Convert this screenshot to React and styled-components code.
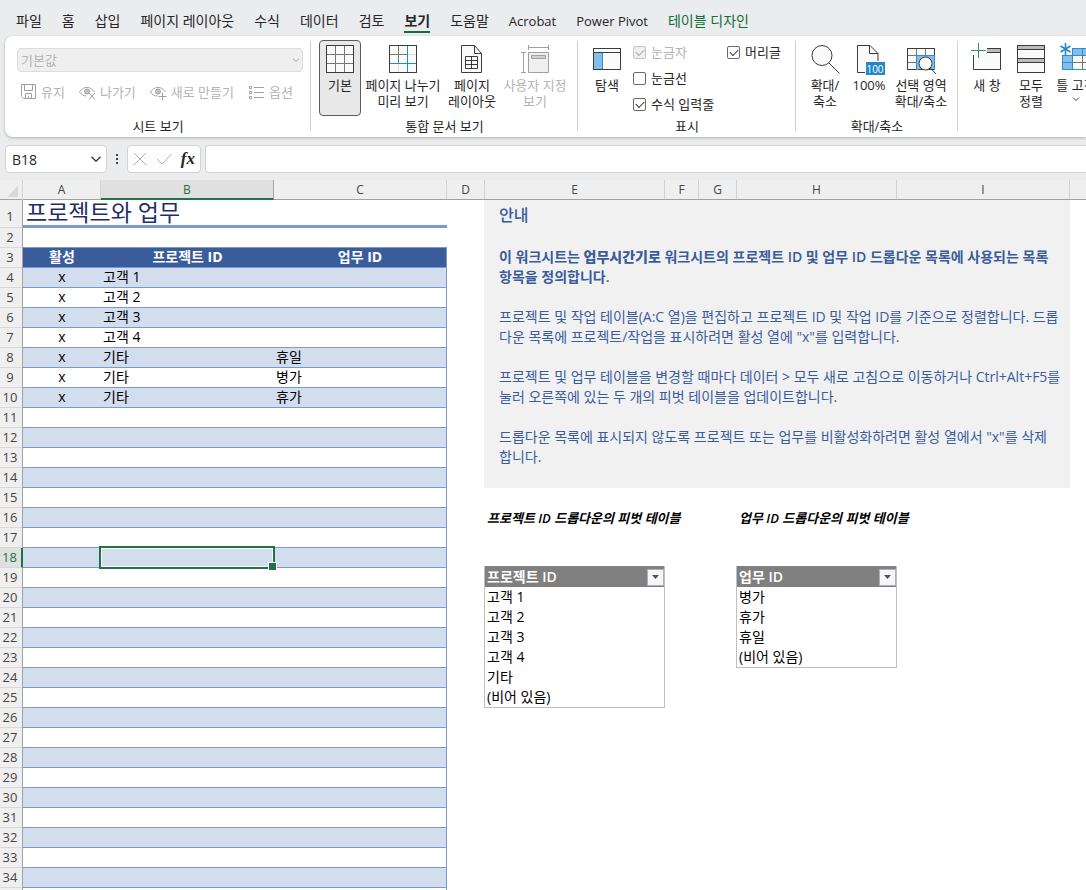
import React from "react";
import styled, { createGlobalStyle, css } from "styled-components";

const uiFont = `"Open Sans", "Noto Sans", "Noto Sans CJK KR", sans-serif`;

const GlobalStyle = createGlobalStyle`
  * {
    box-sizing: border-box;
  }

  body {
    margin: 0;
    background: #eaecee;
    color: #262626;
    font-family: ${uiFont};
    font-size: 13px;
  }

  button, input, select {
    font: inherit;
    color: inherit;
    margin: 0;
  }

  button {
    padding: 0;
    border: 0;
    background: none;
    cursor: pointer;
  }

  svg {
    display: block;
    flex: none;
  }
`;

const Window = styled.div`
  display: flex;
  flex-direction: column;
  height: 100vh;
  overflow: hidden;
`;

/* ---------- tabs ---------- */

const TabBar = styled.nav`
  display: flex;
  gap: 20px;
  padding: 8px 16px 0;
  height: 36px;
`;

const Tab = styled.button`
  height: 25px;
  line-height: 26px;
  white-space: nowrap;
  font-size: ${({ $latin }) => ($latin ? "13px" : "14px")};
  font-weight: ${({ $active }) => ($active ? 700 : 400)};
  color: ${({ $accent }) => ($accent ? "#0f703b" : "#262626")};
  border-bottom: 2px solid ${({ $active }) => ($active ? "#0f703b" : "transparent")};
`;

/* ---------- ribbon ---------- */

const Ribbon = styled.section`
  display: flex;
  flex: none;
  height: 101px;
  margin-left: 5px;
  background: #fff;
  border-radius: 8px 0 0 8px;
  box-shadow: 0 1px 3px rgba(0, 0, 0, 0.25);
  overflow: hidden;
`;

const Group = styled.div`
  display: flex;
  flex-direction: column;
  justify-content: space-between;
  flex: none;
  width: ${({ $width }) => $width}px;
  padding: 4px 0 2px;
  background: linear-gradient(#d0d0d0, #d0d0d0) right 5px / 1px 90px no-repeat;
`;

const GroupItems = styled.div`
  display: flex;
  align-items: flex-start;
  padding-left: ${({ $inset }) => $inset}px;
`;

const GroupLabel = styled.div`
  line-height: 18px;
  text-align: center;
`;

const BigButton = styled.button`
  display: flex;
  flex-direction: column;
  align-items: center;
  flex: none;
  gap: 2px;
  width: ${({ $width }) => $width}px;
  height: 76px;
  padding-top: 2px;
  border: 1px solid ${({ $active }) => ($active ? "#5c5c5c" : "transparent")};
  border-radius: 4px;
  background: ${({ $active }) => ($active ? "#e8e8e8" : "none")};
  color: ${({ disabled }) => (disabled ? "#b4b4b4" : "#262626")};
  line-height: 16px;
  white-space: nowrap;
`;

const ViewPanel = styled.div`
  display: flex;
  flex-direction: column;
  gap: 10px;
  padding: 8px 8px 0 12px;
`;

const SelectBox = styled.div`
  display: grid;
  align-items: center;

  > * {
    grid-area: 1 / 1;
  }

  > svg {
    justify-self: end;
    margin-right: 3px;
  }
`;

const ViewSelect = styled.select`
  appearance: none;
  width: 100%;
  height: 24px;
  padding: 0 3px;
  border: 1px solid #dcdcdc;
  border-radius: 4px;
  background: #efefef;
  color: #b4b4b4;
  opacity: 1;
`;

const SmallButtons = styled.div`
  display: flex;
  gap: 14px;
  padding-left: 4px;
`;

const SmallButton = styled.button`
  display: flex;
  align-items: center;
  gap: 4px;
  height: 20px;
  color: #b4b4b4;
  line-height: 16px;
  white-space: nowrap;
`;

const CheckColumn = styled.div`
  display: flex;
  flex-direction: column;
  gap: 2px;
  width: 94px;
  margin-left: 4px;
`;

const CheckLabel = styled.label`
  display: flex;
  align-items: center;
  gap: 5px;
  height: 24px;
  line-height: 16px;
  white-space: nowrap;
  color: ${({ $disabled }) => ($disabled ? "#b4b4b4" : "#262626")};
`;

const CheckInput = styled.input`
  appearance: none;
  display: grid;
  place-items: center;
  width: 13px;
  height: 13px;
  border: 1px solid #6a6a6a;
  border-radius: 2px;
  background: #fff;

  &:checked::after {
    content: "";
    width: 7px;
    height: 4px;
    margin-bottom: 2px;
    border: solid #333;
    border-width: 0 0 1px 1px;
    transform: rotate(-45deg);
  }

  &:disabled {
    border-color: #c4c4c4;
    background: #f0f0f0;
  }

  &:disabled::after {
    border-color: #a8a8a8;
  }
`;

/* ---------- formula bar ---------- */

const FormulaBar = styled.div`
  display: flex;
  flex: none;
  height: 43px;
  padding: 8px 0 7px 5px;
`;

const fieldBox = css`
  display: flex;
  align-items: center;
  background: #fff;
  border: 1px solid #d2d2d2;
  border-radius: 4px;
`;

const NameBox = styled.div`
  ${fieldBox}
  width: 102px;
  padding: 0 4px 0 6px;
`;

const NameInput = styled.input`
  flex: 1;
  min-width: 0;
  padding: 0;
  border: 0;
  outline: 0;
  font-size: 14px;
`;

const Dots = styled.div`
  display: flex;
  flex-direction: column;
  justify-content: center;
  align-items: center;
  gap: 2px;
  width: 20px;

  i {
    width: 2px;
    height: 2px;
    background: #444;
  }
`;

const FormulaButtons = styled.div`
  ${fieldBox}
  justify-content: space-between;
  width: 74px;
  margin-right: 4px;
  padding: 0 5px;
`;

const FxButton = styled.button`
  font-family: "Liberation Serif", serif;
  font-style: italic;
  font-weight: 700;
  font-size: 17px;
  line-height: 20px;
`;

const FormulaInput = styled.input`
  ${fieldBox}
  flex: 1;
  min-width: 0;
  border-right: 0;
  border-radius: 4px 0 0 4px;
  outline: 0;
`;

/* ---------- sheet ---------- */

const ColumnHeads = styled.div`
  display: grid;
  grid-template-columns: 23px 78px 173px 173px 38px 180px 34px 38px 160px 173px 1fr;
  flex: none;
  height: 20px;
  border-bottom: 1px solid #a0a2a4;
  background: #efefef;
  font-size: 12px;
  line-height: 20px;
  text-align: center;
`;

const ColumnHead = styled.div`
  height: 19px;
  border-right: 1px solid #d4d4d4;
  color: #444;

  ${({ $active }) =>
    $active &&
    css`
      height: 20px;
      border-right-color: #a8a8a8;
      border-bottom: 2px solid #217346;
      background: #e0e0e0;
      color: #217346;
    `}
`;

const Corner = styled.div`
  display: flex;
  align-items: flex-end;
  justify-content: flex-end;
  padding: 0 4px 3px 0;
  border-right: 1px solid #d4d4d4;
`;

const SheetBody = styled.main`
  display: flex;
  flex: 1;
  min-height: 0;
  overflow: hidden;
  background: #fff;
  color: #000;
  font-size: 14px;
`;

const RowHeads = styled.div`
  flex: none;
  width: 23px;
  border-right: 1px solid #a0a2a4;
  background: #efefef;
`;

const RowHead = styled.div`
  height: ${({ $first }) => ($first ? 28 : 20)}px;
  padding: ${({ $first }) => ($first ? 7 : 0)}px 2px 0 0;
  border-bottom: 1px solid #d8d8d8;
  font-size: 13px;
  line-height: 19px;
  text-align: center;
  color: #444;

  ${({ $active }) =>
    $active &&
    css`
      margin-right: -1px;
      border-right: 2px solid #217346;
      background: #e0e0e0;
      color: #217346;
    `}
`;

const ProjectArea = styled.section`
  flex: none;
  width: 424px;
`;

const SheetTitle = styled.h1`
  height: 28px;
  margin: 0;
  padding-left: 3px;
  border-bottom: 3px solid #7b9cc8;
  color: #1f2f66;
  font-size: 23px;
  font-weight: 400;
  line-height: 24px;
`;

const ProjectTable = styled.table`
  width: 100%;
  margin-top: 19px;
  border-top: 1px solid #7b9acb;
  border-right: 1px solid #7b9acb;
  border-spacing: 0;
  table-layout: fixed;
`;

const HeadCell = styled.th`
  width: ${({ $width }) => $width};
  height: 20px;
  padding: 0;
  border-bottom: 1px solid #7b9acb;
  background: #3a5c9b;
  color: #fff;
  font-weight: 700;
  line-height: 18px;
  vertical-align: top;
`;

const Cell = styled.td`
  position: relative;
  height: 20px;
  padding: 0 2px;
  border-bottom: 1px solid #7b9acb;
  background: ${({ $band }) => ($band ? "#d2ddee" : "#fff")};
  text-align: ${({ $center }) => ($center ? "center" : "left")};
  line-height: 18px;
  vertical-align: top;
`;

const Selection = styled.span`
  position: absolute;
  z-index: 1;
  inset: -2px -1px -2px -2px;
  border: 2px solid #217346;
  box-shadow: inset 0 0 0 1px #fff;

  &::after {
    content: "";
    position: absolute;
    right: -4px;
    bottom: -4px;
    width: 7px;
    height: 7px;
    border: 1px solid #fff;
    background: #217346;
  }
`;

const SideArea = styled.div`
  flex: none;
  width: 586px;
  margin-left: 37px;
`;

const InfoPanel = styled.section`
  height: 288px;
  padding: 5px 0 0 15px;
  background: #f1f1f1;
  color: #3a5c9b;
  line-height: 20px;
  white-space: nowrap;

  h2 {
    margin: 0 0 22px;
    font-size: 16px;
    font-weight: 500;
  }

  p {
    margin: 0 0 20px;
  }
`;

const Lead = styled.p`
  font-weight: 600;
`;

const Pivots = styled.div`
  display: grid;
  grid-template-columns: 181px 161px;
  column-gap: 71px;
  align-items: start;
`;

const PivotTitle = styled.h3`
  margin: 20px 0 38px;
  padding-left: 3px;
  font-size: 13px;
  font-weight: 600;
  font-style: italic;
  line-height: 20px;
  white-space: nowrap;
`;

const PivotTable = styled.table`
  width: 100%;
  border: 1px solid #bfbfbf;
  border-top: 0;
  border-spacing: 0;

  th {
    height: 21px;
    padding: 0 0 0 2px;
    background: #808080;
    color: #fff;
    font-weight: 600;
    line-height: 20px;
    text-align: left;
    vertical-align: bottom;
  }

  td {
    height: 20px;
    padding: 0 2px;
    line-height: 20px;
  }
`;

const PivotHead = styled.div`
  display: flex;
  align-items: center;
  justify-content: space-between;
`;

const FilterButton = styled.button`
  display: grid;
  place-items: center;
  width: 17px;
  height: 17px;
  border: 1px solid #b0b0b0;
  background: #f4f6fa;
`;

/* ---------- icons ---------- */

const Icon = ({ size = 32, color = "#3b3b3b", children }) => (
  <svg width={size} height={size} viewBox={`0 0 ${size} ${size}`} fill="none" stroke={color} aria-hidden="true">
    {children}
  </svg>
);

const Chevron = ({ size = 8, color = "#444" }) => (
  <svg width={size} height={size} viewBox="0 0 8 8" fill="none" stroke={color} aria-hidden="true">
    <path d="M1 2.5l3 3 3-3" />
  </svg>
);

const NormalIcon = () => (
  <Icon>
    <path d="M2.5 2.5h27v27h-27z" fill="#fafafa" />
    <path d="M11.5 3v26M20.5 3v26M3 11.5h26M3 20.5h26" stroke="#777" />
    <path d="M2.5 2.5h27v27h-27z" />
  </Icon>
);

const PageBreakIcon = () => (
  <Icon>
    <path d="M2.5 2.5h27v27h-27z" fill="#fafafa" />
    <path d="M11.5 3v17M3 11.5h17" stroke="#777" />
    <path d="M11.5 21v8M21 11.5h8" stroke="#dcdcdc" />
    <path d="M2.5 2.5h27v27h-27z" />
    <path d="M20.5 3v26M3 20.5h26" stroke="#1a8fd8" />
  </Icon>
);

const PageLayoutIcon = () => (
  <Icon>
    <path d="M5.5 2.5h13l7 8v19h-20z" fill="#fafafa" />
    <path d="M18.5 2.5v8h7" />
    <path d="M9.5 13.5h12v12h-12zM15.5 13.5v12M9.5 17.5h12M9.5 21.5h12" />
  </Icon>
);

const CustomViewIcon = () => (
  <Icon color="#a0a0a0">
    <path d="M9.5 9.5h20v20h-20z" fill="#f0f0f0" />
    <path d="M12.5 12.5h14v3h-14z" fill="#d0d0d0" />
    <path d="M9.5 4.5h20M9.5 2v5M29.5 2v5M4.5 9.5v20M2 9.5h5M2 29.5h5" />
  </Icon>
);

const NavigationIcon = () => (
  <Icon>
    <path d="M2.5 5.5h27v21h-27z" fill="#fafafa" />
    <path d="M3 10h8v16H3z" fill="#83beec" stroke="none" />
    <path d="M11.5 10v16" stroke="#2b8fca" />
    <path d="M2.5 9.5h27M2.5 5.5h27v21h-27z" />
  </Icon>
);

const ZoomIcon = () => (
  <Icon>
    <circle cx="13" cy="12.5" r="10" fill="#fafafa" />
    <path d="M20 20l10.5 10.5" />
  </Icon>
);

const HundredIcon = () => (
  <Icon>
    <path d="M12 29.5H4.5v-27H17l8 8V18" fill="#fafafa" />
    <path d="M16.5 2.5v8H25" />
    <path d="M13 19h19v13H13z" fill="#2488c8" stroke="none" />
    <text x="22" y="30" textAnchor="middle" fontSize="10" fontFamily="Open Sans" fill="#fff" stroke="none">
      100
    </text>
  </Icon>
);

const ZoomSelectionIcon = () => (
  <Icon>
    <path d="M2.5 5.5h27v21h-27z" fill="#fafafa" />
    <path d="M12 13h17v13H12z" fill="#83beec" stroke="none" />
    <path d="M11.5 6v6M20.5 6v6M3 12.5h26M3 19.5h8" stroke="#777" />
    <path d="M13 26.5H2.5v-21h27V13" />
    <path d="M11.5 26V12.5h18V26M14 26.5h-3" stroke="#2b8fca" />
    <circle cx="20.5" cy="20.5" r="6.5" fill="#fafafa" />
    <path d="M25.5 25l5.5 6" />
  </Icon>
);

const NewWindowIcon = () => (
  <Icon>
    <path d="M2.5 12v14.5h27v-21H16" fill="#fafafa" />
    <path d="M16 6h13v4H16z" fill="#bcbcbc" stroke="none" />
    <path d="M16 9.5h13M2.5 12v14.5h27v-21H16" />
    <path d="M7.5 0v15M0 7.5h15" stroke="#2f9e50" />
  </Icon>
);

const ArrangeIcon = () => (
  <Icon>
    <path d="M2.5 2.5h27v27h-27z" fill="#fafafa" />
    <path d="M3 3h26v3H3zM3 16h26v3H3z" fill="#bcbcbc" stroke="none" />
    <path d="M2.5 6.5h27M2.5 15.5h27M2.5 19.5h27M2.5 2.5h27v27h-27z" />
  </Icon>
);

const FreezeIcon = () => (
  <Icon>
    <path d="M2.5 5.5h29v21h-29z" fill="#83beec" stroke="#2b8fca" />
    <path d="M13 13h18v13H13z" fill="#fafafa" stroke="none" />
    <path d="M12.5 6v20M22.5 6v7M3 12.5h28M3 19.5h10" stroke="#2b8fca" />
    <path d="M22.5 13v13M13 19.5h18" stroke="#777" />
    <path d="M0 0h12v12H0z" fill="#fff" stroke="none" />
    <path d="M5.5 0v12M.5 3l10 6M10.5 3L.5 9" stroke="#2488c8" strokeWidth="1.6" />
  </Icon>
);

const SaveIcon = () => (
  <Icon size={16} color="#a0a0a0">
    <path d="M.5.5h14v14h-12l-2-2zM3.5.5v6h8v-6M4.5 14.5v-5h6v5M7.5 12v2" />
  </Icon>
);

const Eye = ({ children }) => (
  <Icon size={17} color="#a0a0a0">
    <path d="M.5 8C3 4.5 5.5 3.5 8 3.5s5 1 7.5 4.5M.5 8c2 3 4.5 4 7 4" />
    <circle cx="8" cy="7.5" r="2.5" fill="#c4c4c4" />
    {children}
  </Icon>
);

const ExitIcon = () => (
  <Eye>
    <path d="M10 9l6 6.5M16 9l-6 6.5" />
  </Eye>
);

const NewViewIcon = () => (
  <Eye>
    <path d="M12.5 8.5v8M8.5 12.5h8" />
  </Eye>
);

const OptionsIcon = () => (
  <Icon size={17} color="#a0a0a0">
    <path d="M1.5 2.5h2v2h-2zM1.5 7.5h2v2h-2zM1.5 12.5h2v2h-2zM6 3.5h10M6 8.5h10M6 13.5h10" />
  </Icon>
);

/* ---------- data ---------- */

const tabs = [
  { text: "파일" },
  { text: "홈" },
  { text: "삽입" },
  { text: "페이지 레이아웃" },
  { text: "수식" },
  { text: "데이터" },
  { text: "검토" },
  { text: "보기", active: true },
  { text: "도움말" },
  { text: "Acrobat", latin: true },
  { text: "Power Pivot", latin: true },
  { text: "테이블 디자인", accent: true },
];

const columns = ["A", "B", "C", "D", "E", "F", "G", "H", "I"];

const projects = [
  ["x", "고객 1", ""],
  ["x", "고객 2", ""],
  ["x", "고객 3", ""],
  ["x", "고객 4", ""],
  ["x", "기타", "휴일"],
  ["x", "기타", "병가"],
  ["x", "기타", "휴가"],
];

const ROW_COUNT = 40;
const FIRST_DATA_ROW = 4;
const SELECTED_ROW = 18;

const rowNumbers = Array.from({ length: ROW_COUNT }, (_, i) => i + 1);
const dataRows = rowNumbers.slice(FIRST_DATA_ROW - 1);

/* ---------- components ---------- */

const Check = ({ text, checked, disabled }) => (
  <CheckLabel $disabled={disabled}>
    <CheckInput type="checkbox" defaultChecked={checked} disabled={disabled} />
    {text}
  </CheckLabel>
);

const Pivot = ({ title, field, items }) => (
  <section>
    <PivotTitle>{title}</PivotTitle>
    <PivotTable>
      <thead>
        <tr>
          <th>
            <PivotHead>
              {field}
              <FilterButton aria-label={field}>
                <svg width="7" height="4" viewBox="0 0 7 4" aria-hidden="true">
                  <path d="M0 0h7L3.5 4z" fill="#555" />
                </svg>
              </FilterButton>
            </PivotHead>
          </th>
        </tr>
      </thead>
      <tbody>
        {items.map((item) => (
          <tr key={item}>
            <td>{item}</td>
          </tr>
        ))}
      </tbody>
    </PivotTable>
  </section>
);

const RibbonBar = () => (
  <Ribbon>
    <Group $width={306}>
      <ViewPanel>
        <SelectBox>
          <ViewSelect aria-label="시트 보기" disabled>
            <option>기본값</option>
          </ViewSelect>
          <Chevron color="#a0a0a0" />
        </SelectBox>
        <SmallButtons>
          <SmallButton disabled>
            <SaveIcon />
            유지
          </SmallButton>
          <SmallButton disabled>
            <ExitIcon />
            나가기
          </SmallButton>
          <SmallButton disabled>
            <NewViewIcon />
            새로 만들기
          </SmallButton>
          <SmallButton disabled>
            <OptionsIcon />
            옵션
          </SmallButton>
        </SmallButtons>
      </ViewPanel>
      <GroupLabel>시트 보기</GroupLabel>
    </Group>

    <Group $width={267}>
      <GroupItems $inset={8}>
        <BigButton $width={42} $active>
          <NormalIcon />
          기본
        </BigButton>
        <BigButton $width={84}>
          <PageBreakIcon />
          <span>
            페이지 나누기
            <br />
            미리 보기
          </span>
        </BigButton>
        <BigButton $width={54}>
          <PageLayoutIcon />
          <span>
            페이지
            <br />
            레이아웃
          </span>
        </BigButton>
        <BigButton $width={72} disabled>
          <CustomViewIcon />
          <span>
            사용자 지정
            <br />
            보기
          </span>
        </BigButton>
      </GroupItems>
      <GroupLabel>통합 문서 보기</GroupLabel>
    </Group>

    <Group $width={218}>
      <GroupItems $inset={7}>
        <BigButton $width={44}>
          <NavigationIcon />
          탐색
        </BigButton>
        <CheckColumn>
          <Check text="눈금자" checked disabled />
          <Check text="눈금선" />
          <Check text="수식 입력줄" checked />
        </CheckColumn>
        <Check text="머리글" checked />
      </GroupItems>
      <GroupLabel>표시</GroupLabel>
    </Group>

    <Group $width={162}>
      <GroupItems $inset={8}>
        <BigButton $width={42}>
          <ZoomIcon />
          <span>
            확대/
            <br />
            축소
          </span>
        </BigButton>
        <BigButton $width={46}>
          <HundredIcon />
          100%
        </BigButton>
        <BigButton $width={58}>
          <ZoomSelectionIcon />
          <span>
            선택 영역
            <br />
            확대/축소
          </span>
        </BigButton>
      </GroupItems>
      <GroupLabel>확대/축소</GroupLabel>
    </Group>

    <Group $width={400}>
      <GroupItems $inset={6}>
        <BigButton $width={46}>
          <NewWindowIcon />새 창
        </BigButton>
        <BigButton $width={42}>
          <ArrangeIcon />
          <span>
            모두
            <br />
            정렬
          </span>
        </BigButton>
        <BigButton $width={48}>
          <FreezeIcon />틀 고정
          <Chevron />
        </BigButton>
      </GroupItems>
    </Group>
  </Ribbon>
);

const App = () => (
  <>
    <GlobalStyle />
    <Window>
      <TabBar>
        {tabs.map((tab) => (
          <Tab key={tab.text} $active={tab.active} $latin={tab.latin} $accent={tab.accent}>
            {tab.text}
          </Tab>
        ))}
      </TabBar>

      <RibbonBar />

      <FormulaBar>
        <NameBox>
          <NameInput aria-label="이름 상자" defaultValue="B18" />
          <Chevron size={12} />
        </NameBox>
        <Dots>
          <i />
          <i />
          <i />
        </Dots>
        <FormulaButtons>
          <button aria-label="취소">
            <Icon size={14} color="#b0b0b0">
              <path d="M1 1l12 12M13 1L1 13" />
            </Icon>
          </button>
          <button aria-label="입력">
            <Icon size={16} color="#b0b0b0">
              <path d="M1 8l5 5L15.5 3" />
            </Icon>
          </button>
          <FxButton aria-label="함수 삽입">fx</FxButton>
        </FormulaButtons>
        <FormulaInput aria-label="수식 입력줄" />
      </FormulaBar>

      <ColumnHeads>
        <Corner>
          <svg width="11" height="11" viewBox="0 0 11 11" aria-hidden="true">
            <path d="M11 0v11H0z" fill="#d8d8d8" />
          </svg>
        </Corner>
        {columns.map((name) => (
          <ColumnHead key={name} $active={name === "B"}>
            {name}
          </ColumnHead>
        ))}
      </ColumnHeads>

      <SheetBody>
        <RowHeads>
          {rowNumbers.map((n) => (
            <RowHead key={n} $first={n === 1} $active={n === SELECTED_ROW}>
              {n}
            </RowHead>
          ))}
        </RowHeads>

        <ProjectArea>
          <SheetTitle>프로젝트와 업무</SheetTitle>
          <ProjectTable>
            <thead>
              <tr>
                <HeadCell $width="78px">활성</HeadCell>
                <HeadCell $width="173px">프로젝트 ID</HeadCell>
                <HeadCell>업무 ID</HeadCell>
              </tr>
            </thead>
            <tbody>
              {dataRows.map((n, i) => {
                const [active, project, task] = projects[i] || [];
                const band = i % 2 === 0;
                return (
                  <tr key={n}>
                    <Cell $band={band} $center>
                      {active}
                    </Cell>
                    <Cell $band={band}>
                      {project}
                      {n === SELECTED_ROW && <Selection />}
                    </Cell>
                    <Cell $band={band}>{task}</Cell>
                  </tr>
                );
              })}
            </tbody>
          </ProjectTable>
        </ProjectArea>

        <SideArea>
          <InfoPanel>
            <h2>안내</h2>
            <Lead>
              이 워크시트는 <b>업무시간기로</b> 워크시트의 프로젝트 ID 및 업무 ID 드롭다운 목록에 사용되는 목록
              <br />
              항목을 정의합니다.
            </Lead>
            <p>
              프로젝트 및 작업 테이블(A:C 열)을 편집하고 프로젝트 ID 및 작업 ID를 기준으로 정렬합니다. 드롭
              <br />
              다운 목록에 프로젝트/작업을 표시하려면 활성 열에 "x"를 입력합니다.
            </p>
            <p>
              프로젝트 및 업무 테이블을 변경할 때마다 데이터 &gt; 모두 새로 고침으로 이동하거나 Ctrl+Alt+F5를
              <br />
              눌러 오른쪽에 있는 두 개의 피벗 테이블을 업데이트합니다.
            </p>
            <p>
              드롭다운 목록에 표시되지 않도록 프로젝트 또는 업무를 비활성화하려면 활성 열에서 "x"를 삭제
              <br />
              합니다.
            </p>
          </InfoPanel>
          <Pivots>
            <Pivot
              title="프로젝트 ID 드롭다운의 피벗 테이블"
              field="프로젝트 ID"
              items={["고객 1", "고객 2", "고객 3", "고객 4", "기타", "(비어 있음)"]}
            />
            <Pivot
              title="업무 ID 드롭다운의 피벗 테이블"
              field="업무 ID"
              items={["병가", "휴가", "휴일", "(비어 있음)"]}
            />
          </Pivots>
        </SideArea>
      </SheetBody>
    </Window>
  </>
);

export default App;
